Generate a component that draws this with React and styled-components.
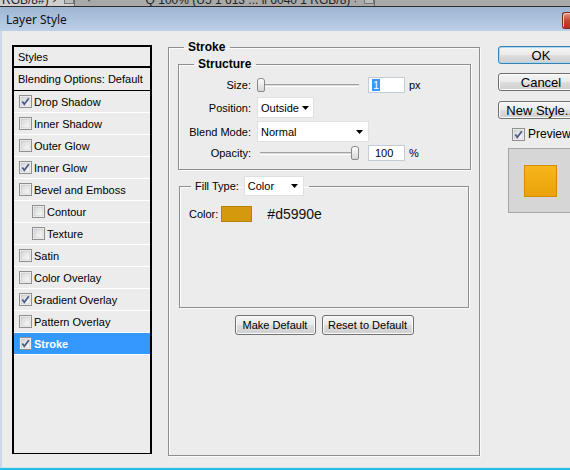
import React from "react";
import styled, { createGlobalStyle } from "styled-components";

const UI = `"Liberation Sans", Arial, sans-serif`;

const GlobalStyle = createGlobalStyle`
  * { box-sizing: border-box; }
  body { margin: 0; background: #ececec; }
`;

const Window = styled.div`
  width: 570px;
  height: 470px;
  overflow: hidden;
  display: flex;
  flex-direction: column;
  background: #ececec;
  font-family: ${UI};
  font-size: 11px;
  color: #000;
`;

const TopStrip = styled.div`
  height: 7px;
  flex-shrink: 0;
  display: flex;
  overflow: hidden;
  background: #a9a9a9;
  border-bottom: 1px solid #2e2e2e;
`;

const DocTab = styled.div`
  display: flex;
  align-items: flex-start;
  gap: 8px;
  flex-shrink: 0;
  width: ${(p) => p.$w}px;
  padding-left: ${(p) => p.$pad || 2}px;
  background: ${(p) => (p.$light ? "#cfcfcf" : "#a9a9a9")};
  border-right: 1px solid #6a6a6a;
  overflow: hidden;
  white-space: nowrap;
`;

const TabText = styled.span`
  display: block;
  height: 6px;
  overflow: hidden;
  margin-left: ${(p) => p.$ml || 0}px;
  font-family: "Liberation Sans", sans-serif;
  font-size: 12px;
  line-height: 1px;
  color: #222;
`;

const TabBox = styled.span`
  width: 10px;
  height: 4px;
  flex-shrink: 0;
  border: 1px solid #777;
  border-top: none;
  background: #bbb;
`;

const TitleBar = styled.div`
  height: 24px;
  flex-shrink: 0;
  display: flex;
  align-items: center;
  justify-content: space-between;
  padding-left: 6px;
  background: linear-gradient(#9db5d2, #bcd0e7);
`;

const Title = styled.span`
  font-family: "Noto Sans", sans-serif;
  font-size: 12px;
  color: #111;
  margin-top: 1px;
`;

const CloseBtn = styled.div`
  width: 8px;
  height: 17px;
  margin-top: 2px;
  border: 1px solid #7a2d22;
  border-right: none;
  border-radius: 3px 0 0 3px;
  background: linear-gradient(#e59c8c, #c8452e 50%, #b63120);
  box-shadow: inset 1px 1px 0 #f3c5bb;
`;

const Body = styled.div`
  flex: 1;
  display: flex;
  align-items: flex-start;
  overflow: hidden;
  padding-left: 10px;
  border-left: 2px solid #cad8ea;
  border-bottom: 1px solid #d7e3f0;
`;

const BottomEdge = styled.div`
  height: 2px;
  flex-shrink: 0;
  background: #27bfe0;
`;

/* ---------- left styles list ---------- */

const StylesList = styled.div`
  width: 140px;
  height: 409px;
  flex-shrink: 0;
  margin-top: 14px;
  border: 2px solid #000;
  border-bottom-width: 1px;
  display: flex;
  flex-direction: column;
`;

const HeaderRow = styled.div`
  height: ${(p) => p.$h}px;
  flex-shrink: 0;
  display: flex;
  align-items: center;
  padding-left: 4px;
  white-space: nowrap;
  border-bottom: ${(p) => p.$line}px solid #000;
`;

const StyleRow = styled.div`
  height: 22px;
  flex-shrink: 0;
  display: flex;
  align-items: center;
  gap: 2px;
  padding-left: ${(p) => (p.$sub ? 18 : 5)}px;
  border-bottom: 1px solid #fff;
  white-space: nowrap;
  background: ${(p) => (p.$active ? "#3399ff" : "transparent")};
  color: ${(p) => (p.$active ? "#fff" : "#000")};
  font-weight: ${(p) => (p.$active ? "bold" : "normal")};
`;

const Check = ({ checked }) => (
  <svg width="13" height="13" viewBox="0 0 13 13" style={{ flexShrink: 0 }}>
    <defs>
      <linearGradient id="cbg" x1="0" y1="0" x2="1" y2="1">
        <stop offset="0" stopColor="#d6d6d6" />
        <stop offset="1" stopColor="#fbfbfb" />
      </linearGradient>
    </defs>
    <rect x="0.5" y="0.5" width="12" height="12" fill="#fff" stroke="#8e8f8f" />
    <rect x="2" y="2" width="9" height="9" fill="url(#cbg)" stroke="#b8b8b8" strokeWidth="0.6" />
    {checked && (
      <path d="M3.3 6.4 L5.3 9.2 L9.8 3.2" fill="none" stroke="#4a5c8c" strokeWidth="1.8" />
    )}
  </svg>
);

const styleItems = [
  { label: "Drop Shadow", checked: true },
  { label: "Inner Shadow" },
  { label: "Outer Glow" },
  { label: "Inner Glow", checked: true },
  { label: "Bevel and Emboss" },
  { label: "Contour", sub: true },
  { label: "Texture", sub: true },
  { label: "Satin" },
  { label: "Color Overlay" },
  { label: "Gradient Overlay", checked: true },
  { label: "Pattern Overlay" },
  { label: "Stroke", checked: true, active: true },
];

/* ---------- middle stroke panel ---------- */

const Group = styled.fieldset`
  margin: ${(p) => p.$m || 0};
  padding: ${(p) => p.$pad || 0};
  min-width: 0;
  flex-shrink: 0;
  width: ${(p) => p.$w}px;
  height: ${(p) => p.$h}px;
  border: 1px solid #8f8f8f;
  box-shadow: inset 1px 1px 0 #fbfbfb, 1px 1px 0 #fbfbfb;
`;

const Legend = styled.legend`
  margin-left: ${(p) => p.$ml || 15}px;
  padding: 0 5px 0 4px;
  font-weight: ${(p) => (p.$bold ? "bold" : "normal")};
  font-size: ${(p) => (p.$bold ? 12 : 11)}px;
  line-height: 14px;
  display: ${(p) => (p.$flex ? "flex" : "block")};
  align-items: center;
  gap: 5px;
`;

const FieldGrid = styled.div`
  display: grid;
  grid-template-columns: 72px 1fr;
  grid-template-rows: 18px 21px 21px 16px;
  column-gap: 6px;
  row-gap: 3px;
  align-items: center;
`;

const Label = styled.span`
  text-align: right;
`;

const Controls = styled.div`
  display: flex;
  align-items: center;
`;

const SliderWrap = styled.div`
  position: relative;
  width: ${(p) => p.$w}px;
  height: 16px;
  margin-left: ${(p) => p.$ml || 0}px;
  margin-right: 9px;
`;

const Track = styled.div`
  position: absolute;
  left: 0;
  right: 0;
  top: 7px;
  height: 3px;
  border-top: 1px solid #a3a3a3;
  border-bottom: 1px solid #fff;
  background: #d8d8d8;
`;

const Thumb = styled.div`
  position: absolute;
  top: 1px;
  width: 8px;
  height: 14px;
  border: 1px solid #8a8a8a;
  border-radius: 3px 3px 2px 2px;
  background: linear-gradient(#fdfdfd, #d6d6d6);
`;

const Slider = ({ width, value, ml }) => (
  <SliderWrap $w={width} $ml={ml}>
    <Track />
    <Thumb style={{ left: Math.round((width - 8) * value) }} />
  </SliderWrap>
);

const NumBox = styled.div`
  width: 37px;
  height: ${(p) => p.$h}px;
  display: flex;
  align-items: center;
  padding-left: ${(p) => p.$pl}px;
  background: #fff;
  border: 1px solid #c4ccd4;
  margin-right: 4px;
`;

const Selected = styled.span`
  background: #3399ff;
  color: #fff;
  padding: 0 1px;
`;

const Select = styled.div`
  width: ${(p) => p.$w}px;
  height: ${(p) => p.$h || 21}px;
  display: flex;
  align-items: center;
  justify-content: space-between;
  gap: 3px;
  padding: 0 5px 0 3px;
  background: #fff;
  border: 1px solid #e0e0e0;
  font-weight: normal;
  font-size: 11px;
  white-space: nowrap;
`;

const Arrow = () => (
  <svg width="7" height="4" viewBox="0 0 7 4" style={{ flexShrink: 0 }}>
    <path d="M0 0 H7 L3.5 4 Z" fill="#000" />
  </svg>
);

const ColorRow = styled.div`
  display: flex;
  align-items: center;
  padding: 10px 0 0 9px;
`;

const Swatch = styled.div`
  width: 31px;
  height: 16px;
  margin-left: 3px;
  background: ${(p) => p.$c};
  border: 1px solid #b78008;
`;

const Hex = styled.span`
  margin-left: 15px;
  font-family: "Liberation Sans", sans-serif;
  font-size: 14px;
  color: #111;
`;

const ButtonRow = styled.div`
  display: flex;
  justify-content: center;
  gap: 6px;
  margin-top: 7px;
`;

const Button = styled.div`
  width: ${(p) => p.$w}px;
  height: ${(p) => p.$h || 20}px;
  margin-top: ${(p) => p.$mt || 0}px;
  display: flex;
  align-items: center;
  justify-content: center;
  flex-shrink: 0;
  white-space: nowrap;
  font-size: ${(p) => p.$fs || 11}px;
  border: 1px solid ${(p) => (p.$default ? "#3c7fb1" : "#707070")};
  border-radius: 3px;
  background: linear-gradient(#f4f4f4 0%, #ebebeb 48%, #dddddd 52%, #cfcfcf 100%);
  box-shadow: ${(p) => (p.$default ? "inset 0 0 0 1px #a7d8f3" : "inset 0 0 0 1px #fbfbfb")};
`;

/* ---------- right column ---------- */

const RightCol = styled.div`
  margin: 15px 0 0 18px;
  flex-shrink: 0;
  display: flex;
  flex-direction: column;
`;

const PreviewRow = styled.div`
  display: flex;
  align-items: center;
  gap: 3px;
  height: 14px;
  margin: 8px 0 0 14px;
  font-size: 12px;
`;

const PreviewBox = styled.div`
  width: 80px;
  height: 65px;
  margin: 7px 0 0 10px;
  padding: 16px 0 0 15px;
  background: #d6d6d6;
  border: 1px solid #a5a5a5;
`;

const PreviewSquare = styled.div`
  width: 33px;
  height: 32px;
  border: 1px solid #d58d00;
  background: linear-gradient(#f7b51c, #eba20a);
`;

export default function App() {
  return (
    <Window>
      <GlobalStyle />
      <TopStrip>
        <DocTab $w={75} $light>
          <TabText>RGB/8#) ×</TabText>
          <TabBox />
        </DocTab>
        <DocTab $w={300} $pad={12}>
          <TabText>·</TabText>
          <TabText $ml={40}>_Q 100% (U5 1 613 ... ll 6040 1 RGB/8) ×</TabText>
          <TabBox />
        </DocTab>
      </TopStrip>
      <TitleBar>
        <Title>Layer Style</Title>
        <CloseBtn />
      </TitleBar>
      <Body>
        <StylesList>
          <HeaderRow $h={21} $line={2}>Styles</HeaderRow>
          <HeaderRow $h={23} $line={1}>Blending Options: Default</HeaderRow>
          {styleItems.map((it) => (
            <StyleRow key={it.label} $sub={it.sub} $active={it.active}>
              <Check checked={it.checked} />
              {it.label}
            </StyleRow>
          ))}
        </StylesList>

        <Group $m="9px 0 0 16px" $w={312} $h={416}>
          <Legend $bold>Stroke</Legend>
          <Group $m="3px 0 0 9px" $pad="5px 0 0 0" $w={293} $h={113}>
            <Legend $bold>Structure</Legend>
            <FieldGrid>
              <Label>Size:</Label>
              <Controls>
                <Slider width={102} value={0} />
                <NumBox $h={16} $pl={3}>
                  <Selected>1</Selected>
                </NumBox>
                px
              </Controls>
              <Label>Position:</Label>
              <Controls>
                <Select $w={57}>
                  Outside
                  <Arrow />
                </Select>
              </Controls>
              <Label>Blend Mode:</Label>
              <Controls>
                <Select $w={112}>
                  Normal
                  <Arrow />
                </Select>
              </Controls>
              <Label>Opacity:</Label>
              <Controls>
                <Slider width={99} value={1} ml={3} />
                <NumBox $h={16} $pl={6}>100</NumBox>
                %
              </Controls>
            </FieldGrid>
          </Group>

          <Group $m="6px 0 0 10px" $w={290} $h={132}>
            <Legend $flex $ml={11}>
              Fill Type:
              <Select $w={60} $h={20}>
                Color
                <Arrow />
              </Select>
            </Legend>
            <ColorRow>
              Color:
              <Swatch $c="#d5990e" />
              <Hex>#d5990e</Hex>
            </ColorRow>
          </Group>

          <ButtonRow>
            <Button $w={81}>Make Default</Button>
            <Button $w={92}>Reset to Default</Button>
          </ButtonRow>
        </Group>

        <RightCol>
          <Button $w={86} $h={18} $fs={13} $default>
            OK
          </Button>
          <Button $w={86} $h={18} $fs={13} $mt={9}>
            Cancel
          </Button>
          <Button $w={86} $h={18} $fs={13} $mt={10}>
            New Style...
          </Button>
          <PreviewRow>
            <Check checked />
            Preview
          </PreviewRow>
          <PreviewBox>
            <PreviewSquare />
          </PreviewBox>
        </RightCol>
      </Body>
      <BottomEdge />
    </Window>
  );
}
